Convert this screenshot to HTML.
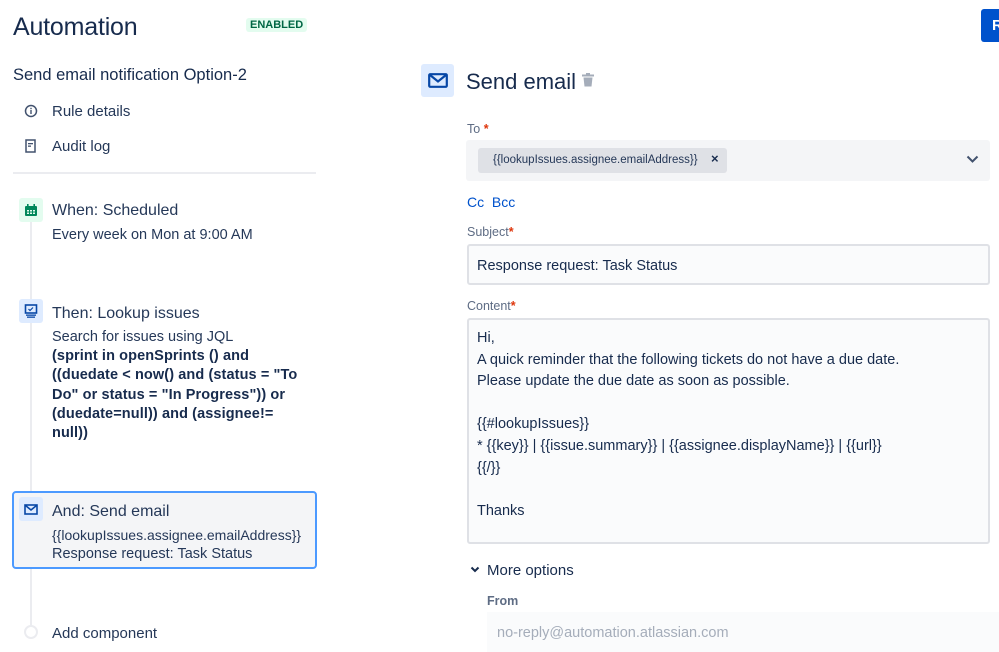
<!DOCTYPE html>
<html><head><style>
*{margin:0;padding:0;box-sizing:border-box}
body{width:999px;height:652px;overflow:hidden;background:#fff;font-family:"Liberation Sans",sans-serif;color:#172b4d;position:relative}
.a{position:absolute;white-space:nowrap}
.ic{position:absolute;width:24px;height:24px;border-radius:3px;display:flex;align-items:center;justify-content:center}
.lbl{font-size:12.5px;color:#5e6c84;font-weight:bold}
.lbl b{color:#de350b}
</style></head><body>
<div class="a" style="left:13px;top:13px;font-size:25px;letter-spacing:-0.2px">Automation</div>
<div class="a" style="left:246px;top:18px;font-size:11px;font-weight:bold;color:#006644;background:#e3fcef;padding:1px 4px;border-radius:3px">ENABLED</div>
<div class="a" style="left:981px;top:9px;width:30px;height:33px;background:#0052cc;border-radius:3px;color:#fff;font-weight:bold;font-size:15px;padding:8px 0 0 11px">R</div>

<div class="a" style="left:13px;top:66px;font-size:16.5px;">Send email notification Option-2</div>
<svg class="a" style="left:24px;top:104px" width="14" height="14" viewBox="0 0 14 14"><circle cx="7" cy="7" r="5.5" fill="none" stroke="#42526e" stroke-width="1.5"/><rect x="6.3" y="6" width="1.4" height="4" fill="#42526e"/><rect x="6.3" y="3.8" width="1.4" height="1.4" fill="#42526e"/></svg>
<div class="a" style="left:52px;top:103px;font-size:15px;color:#253858">Rule details</div>
<svg class="a" style="left:25px;top:139px" width="12" height="15" viewBox="0 0 12 15"><rect x="1" y="1" width="9" height="12" fill="none" stroke="#42526e" stroke-width="1.5"/><rect x="3" y="4" width="5" height="1.3" fill="#42526e"/><rect x="3" y="6.5" width="3" height="1.3" fill="#42526e"/></svg>
<div class="a" style="left:52px;top:138px;font-size:15px;color:#253858">Audit log</div>
<div class="a" style="left:13px;top:172px;width:303px;height:2px;background:#ebecf0"></div>

<div class="a" style="left:30px;top:222px;width:2px;height:405px;background:#ebecf0"></div>
<div class="ic" style="left:19px;top:198px;background:#e3fcef"><svg width="14" height="13" viewBox="0 0 14 13"><rect x="1" y="2" width="12" height="10" rx="1" fill="#00875a"/><rect x="3" y="0" width="1.6" height="3" fill="#00875a"/><rect x="9.4" y="0" width="1.6" height="3" fill="#00875a"/><g fill="#e3fcef"><rect x="3" y="6" width="2" height="1.5"/><rect x="6" y="6" width="2" height="1.5"/><rect x="9" y="6" width="2" height="1.5"/><rect x="3" y="8.5" width="2" height="1.5"/><rect x="6" y="8.5" width="2" height="1.5"/><rect x="9" y="8.5" width="2" height="1.5"/></g></svg></div>
<div class="a" style="left:52px;top:202px;font-size:16px;color:#253858">When: Scheduled</div>
<div class="a" style="left:52px;top:227px;font-size:14.5px;color:#253858">Every week on Mon at 9:00 AM</div>

<div class="ic" style="left:19px;top:299px;background:#deebff"><svg width="14" height="14" viewBox="0 0 14 14"><rect x="1.5" y="1" width="11" height="8" fill="none" stroke="#0747a6" stroke-width="1.6"/><path d="M4.5 5l1.5 1.5 3-3" stroke="#0747a6" fill="none" stroke-width="1.2"/><rect x="2" y="10.5" width="10" height="1.3" fill="#0747a6"/><rect x="3" y="12.5" width="8" height="1.3" fill="#0747a6"/></svg></div>
<div class="a" style="left:52px;top:305px;font-size:16px;color:#253858">Then: Lookup issues</div>
<div class="a" style="left:52px;top:329px;font-size:14.5px;color:#253858">Search for issues using JQL</div>
<div class="a" style="left:52px;top:347px;font-size:14.5px;font-weight:bold;line-height:19.3px;color:#172b4d;letter-spacing:0.1px">(sprint in openSprints () and<br>((duedate &lt; now() and (status = "To<br>Do" or status = "In Progress")) or<br>(duedate=null)) and (assignee!=<br>null))</div>

<div class="a" style="left:12px;top:491px;width:305px;height:78px;border:2px solid #4c9aff;border-radius:4px;background:#f4f5f7"></div>
<div class="ic" style="left:19px;top:497px;background:#deebff"><svg width="14" height="11" viewBox="0 0 14 11"><rect x="1" y="1" width="12" height="9" fill="none" stroke="#0747a6" stroke-width="1.6"/><path d="M1.5 1.5L7 6l5.5-4.5" stroke="#0747a6" fill="none" stroke-width="1.6"/></svg></div>
<div class="a" style="left:52px;top:503px;font-size:16px;color:#253858">And: Send email</div>
<div class="a" style="left:52px;top:527px;font-size:14px;color:#253858">{{lookupIssues.assignee.emailAddress}}</div>
<div class="a" style="left:52px;top:546px;font-size:14.5px;color:#253858">Response request: Task Status</div>

<div class="a" style="left:24px;top:625px;width:14px;height:14px;border-radius:50%;border:2px solid #ebecf0;background:#fff"></div>
<div class="a" style="left:52px;top:625px;font-size:15px;color:#253858">Add component</div>

<div class="ic" style="left:421px;top:64px;width:33px;height:33px;background:#deebff"><svg width="20" height="15" viewBox="0 0 20 15"><rect x="1.2" y="1.2" width="17.6" height="12.6" rx="1" fill="none" stroke="#0747a6" stroke-width="2.2"/><path d="M2 2l8 6.5L18 2" stroke="#0747a6" fill="none" stroke-width="2.2"/></svg></div>
<div class="a" style="left:466px;top:69px;font-size:22px">Send email</div>
<svg class="a" style="left:582px;top:73px" width="12" height="14" viewBox="0 0 12 14"><rect x="0" y="1.5" width="12" height="2" fill="#a5adba"/><rect x="4" y="0" width="4" height="2" fill="#a5adba"/><path d="M1.5 4.5h9l-1 9h-7z" fill="#a5adba"/></svg>

<div class="a lbl" style="left:467px;top:122px;font-weight:normal">To <b>*</b></div>
<div class="a" style="left:466px;top:140px;width:524px;height:41px;background:#f4f5f7;border-radius:3px"></div>
<div class="a" style="left:478px;top:148px;width:249px;height:25px;background:#dfe1e6;border-radius:3px;font-size:11.5px;color:#253858;padding:6px 0 0 15px">{{lookupIssues.assignee.emailAddress}}<span style="position:absolute;left:233px;top:3px;font-weight:bold;font-size:13px;color:#172b4d">×</span></div>
<svg class="a" style="left:966px;top:155px" width="13" height="9" viewBox="0 0 13 9"><path d="M1.5 1.5l5 5 5-5" stroke="#42526e" stroke-width="2" fill="none"/></svg>

<div class="a" style="left:467px;top:194px;font-size:14px;color:#0052cc">Cc&nbsp;&nbsp;Bcc</div>
<div class="a lbl" style="left:467px;top:225px;font-weight:normal">Subject<b>*</b></div>
<div class="a" style="left:467px;top:244px;width:523px;height:41px;border:2px solid #dfe1e6;border-radius:3px;background:#fafbfc;font-size:14.5px;padding:12px 0 0 8px">Response request: Task Status</div>

<div class="a lbl" style="left:467px;top:299px;font-weight:normal">Content<b>*</b></div>
<div class="a" style="left:467px;top:318px;width:523px;height:226px;border:2px solid #dfe1e6;border-radius:3px;background:#fafbfc;font-size:14.5px;line-height:21.6px;padding:8px 0 0 8px;white-space:pre">Hi,
A quick reminder that the following tickets do not have a due date.
Please update the due date as soon as possible.

{{#lookupIssues}}
* {{key}} | {{issue.summary}} | {{assignee.displayName}} | {{url}}
{{/}}

Thanks</div>

<svg class="a" style="left:470px;top:566px" width="10" height="7" viewBox="0 0 10 7"><path d="M1.5 1.5l3.5 3.5 3.5-3.5" stroke="#172b4d" stroke-width="2" fill="none"/></svg>
<div class="a" style="left:487px;top:562px;font-size:15px">More options</div>
<div class="a lbl" style="left:487px;top:594px">From</div>
<div class="a" style="left:487px;top:612px;width:520px;height:40px;background:#fafbfc;font-size:14.5px;color:#a5adba;padding:13px 0 0 10px">no-reply@automation.atlassian.com</div>
</body></html>
